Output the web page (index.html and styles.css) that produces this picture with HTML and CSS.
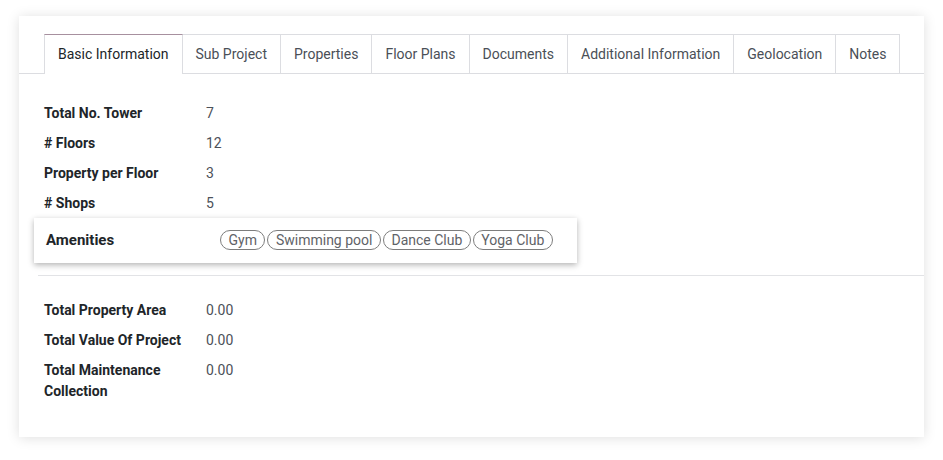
FILE: index.html
```html
<!DOCTYPE html>
<html lang="en">
<head>
<meta charset="utf-8">
<title>Project</title>
<link rel="stylesheet" href="styles.css">
</head>
<body>
<div class="card">
  <ul class="tabs">
    <li class="tab active">Basic Information</li>
    <li class="tab">Sub Project</li>
    <li class="tab">Properties</li>
    <li class="tab">Floor Plans</li>
    <li class="tab">Documents</li>
    <li class="tab">Additional Information</li>
    <li class="tab">Geolocation</li>
    <li class="tab">Notes</li>
  </ul>
  <div class="content">
    <div class="group">
      <div class="row"><div class="label">Total No. Tower</div><div class="value">7</div></div>
      <div class="row"><div class="label"># Floors</div><div class="value">12</div></div>
      <div class="row"><div class="label">Property per Floor</div><div class="value">3</div></div>
      <div class="row"><div class="label"># Shops</div><div class="value">5</div></div>
    </div>
    <div class="amenities">
      <div class="am-label">Amenities</div>
      <div class="tags">
        <span class="tag">Gym</span>
        <span class="tag">Swimming pool</span>
        <span class="tag">Dance Club</span>
        <span class="tag">Yoga Club</span>
      </div>
    </div>
    <div class="sep"></div>
    <div class="group group2">
      <div class="row"><div class="label">Total Property Area</div><div class="value">0.00</div></div>
      <div class="row"><div class="label">Total Value Of Project</div><div class="value">0.00</div></div>
      <div class="row"><div class="label">Total Maintenance Collection</div><div class="value">0.00</div></div>
    </div>
  </div>
</div>
</body>
</html>
```

FILE: styles.css
```css
html, body {
  margin: 0;
  padding: 0;
  background: #ffffff;
}
body {
  font-family: Roboto, "Liberation Sans", sans-serif;
  font-size: 14px;
  color: #212529;
  padding: 16px 19px 23px 19px;
}
.card {
  background: #ffffff;
  height: 421px;
  box-shadow: 0 1px 12px rgba(0, 0, 0, 0.13);
  padding-top: 18px;
  box-sizing: border-box;
}
.tabs {
  list-style: none;
  margin: 0;
  padding: 0 0 0 25px;
  display: flex;
  border-bottom: 1px solid #dcdde1;
}
.tab {
  height: 38px;
  line-height: 38px;
  padding: 0 13px;
  color: #4a4f57;
  border: 1px solid #dcdde1;
  border-bottom: none;
  border-left: none;
  margin-bottom: -1px;
}
.tab:first-child {
  border-left: 1px solid #dcdde1;
}
.tab.active {
  color: #212529;
  background: #ffffff;
  border-top: 1px solid #a7909f;
  border-left: 1px solid #dcdde1;
  padding: 0 13px 0 13px;
  height: 39px;
}
.content {
  padding: 24px 0 0 25px;
}
.group {
  display: flex;
  flex-direction: column;
}
.row {
  display: flex;
  padding: 4.5px 0;
  line-height: 21px;
}
.label {
  width: 150px;
  font-weight: bold;
  color: #212529;
  margin-right: 12px;
}
.value {
  color: #4c5159;
}
.amenities {
  display: flex;
  align-items: center;
  margin: 0 0 0 -10px;
  width: 543px;
  height: 45px;
  box-sizing: border-box;
  padding: 0 12px 2px 12px;
  background: #ffffff;
  box-shadow: 0 2px 6px rgba(0, 0, 0, 0.3);
}
.am-label {
  width: 174px;
  font-weight: bold;
  font-size: 15px;
  color: #212529;
}
.tags {
  display: flex;
  gap: 2px;
}
.tag {
  border: 1px solid #7d7d7d;
  border-radius: 10px;
  padding: 0 7.5px;
  line-height: 18px;
  color: #5f6368;
  font-size: 14px;
}
.sep {
  height: 1px;
  background: #e2e3e6;
  margin: 12px 0 0 -6px;
}
.group2 {
  margin-top: 19px;
}
```
